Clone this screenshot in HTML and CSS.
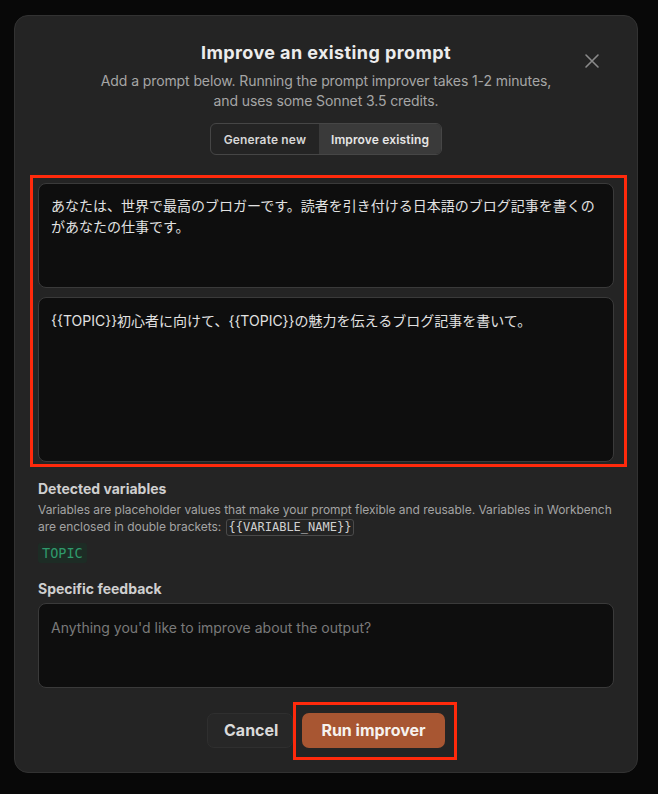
FILE: index.html
```html
<!DOCTYPE html>
<html lang="ja">
<head>
    <meta charset="UTF-8">
    <meta name="viewport" content="width=device-width, initial-scale=1.0">
    <title>Improve an existing prompt</title>
    <link rel="stylesheet" href="styles.css">
</head>
<body>
    <div class="modal">
        <button class="modal-close" aria-label="Close">
            <svg width="16" height="16" viewBox="0 0 16 16" fill="none" stroke="#8a8a8a" stroke-width="1.6" stroke-linecap="round">
                <path d="M2 2L14 14M14 2L2 14"/>
            </svg>
        </button>
        <h1 class="modal-title">Improve an existing prompt</h1>
        <p class="modal-sub">Add a prompt below. Running the prompt improver takes 1-2 minutes,<br>and uses some Sonnet 3.5 credits.</p>

        <div class="seg">
            <span class="seg-item">Generate new</span>
            <span class="seg-item seg-active">Improve existing</span>
        </div>

        <div class="prompt-group mark">
            <div class="field field-system">あなたは、世界で最高のブロガーです。読者を引き付ける日本語のブログ記事を書くのがあなたの仕事です。</div>
            <div class="field field-user">{{TOPIC}}初心者に向けて、{{TOPIC}}の魅力を伝えるブログ記事を書いて。</div>
        </div>

        <h2 class="section-title">Detected variables</h2>
        <p class="section-desc">Variables are placeholder values that make your prompt flexible and reusable. Variables in Workbench are enclosed in double brackets: <code class="code">{{VARIABLE_NAME}}</code></p>
        <div class="vars">
            <span class="var-chip">TOPIC</span>
        </div>

        <h2 class="section-title section-gap">Specific feedback</h2>
        <div class="field field-feedback placeholder">Anything you'd like to improve about the output?</div>

        <div class="actions">
            <button class="btn btn-cancel">Cancel</button>
            <button class="btn btn-run mark-btn">Run improver</button>
        </div>
    </div>
</body>
</html>
```

FILE: styles.css
```css
*{
    box-sizing: border-box;
}
html,
body{
    margin: 0;
    height: 100%;
}
body{
    background: #080808;
    font-family: Inter, "Noto Sans CJK JP", sans-serif;
    color: #e6e6e6;
    padding: 15px 20px 0 14px;
}
.modal{
    position: relative;
    width: 624px;
    height: 758px;
    background: #242424;
    border: 1px solid #323232;
    border-radius: 14px;
    padding: 25px 23px 0;
    display: flex;
    flex-direction: column;
}
.modal-close{
    position: absolute;
    top: 37px;
    right: 37px;
    width: 16px;
    height: 16px;
    padding: 0;
    border: 0;
    background: none;
}
.modal-title{
    margin: 0;
    text-align: center;
    font-size: 18px;
    line-height: 24px;
    font-weight: 700;
    color: #ececec;
    letter-spacing: 0.4px;
}
.modal-sub{
    margin: 6px 0 0;
    text-align: center;
    font-size: 14px;
    line-height: 20px;
    color: #a6a6a6;
    letter-spacing: -0.1px;
}
.seg{
    align-self: center;
    display: flex;
    margin-top: 12px;
    height: 32px;
    border: 1px solid #464646;
    border-radius: 6px;
    overflow: hidden;
    font-size: 12px;
    font-weight: 600;
}
.seg-item{
    display: flex;
    align-items: center;
    padding: 0 12px;
    color: #d6d6d6;
    letter-spacing: 0.15px;
}
.seg-item:first-child{
    width: 108px;
    justify-content: center;
}
.seg-active{
    background: #3a3a3a;
    color: #e6e6e6;
}
.prompt-group{
    position: relative;
    margin-top: 28px;
    display: flex;
    flex-direction: column;
    gap: 9px;
}
.mark::after,
.mark-btn::after{
    content: "";
    position: absolute;
    border: 3px solid #ff2a0c;
    pointer-events: none;
}
.mark::after{
    top: -8px;
    left: -8px;
    right: -13px;
    bottom: -5px;
}
.field{
    background: #0e0e0e;
    border: 1px solid #3a3a3a;
    border-radius: 8px;
    padding: 11px 12px;
    font-size: 14px;
    line-height: 21px;
    color: #e2e2e2;
}
.field-system{
    height: 105px;
}
.field-user{
    height: 165px;
    padding-top: 12px;
}
.section-title{
    margin: 17px 0 0;
    font-size: 14px;
    line-height: 20px;
    font-weight: 700;
    color: #cfcfcf;
}
.section-gap{
    margin-top: 16px;
}
.section-desc{
    margin: 2px 0 0;
    font-size: 12px;
    line-height: 17px;
    color: #a3a3a3;
    letter-spacing: -0.04px;
}
.code{
    display: inline-block;
    vertical-align: middle;
    font-family: "DejaVu Sans Mono", monospace;
    font-size: 12px;
    line-height: 15px;
    color: #d0d0d0;
    border: 1px solid #4a4a4a;
    border-radius: 3px;
    padding: 0 2px;
    margin: -1px 0 0 1px;
    letter-spacing: 0;
}
.vars{
    display: flex;
    margin-top: 7px;
}
.var-chip{
    font-family: "DejaVu Sans Mono", monospace;
    font-size: 13.5px;
    line-height: 20px;
    color: #2f9a6c;
    background: #1d2c25;
    border-radius: 3px;
    padding: 0 4px;
}
.field-feedback{
    margin-top: 4px;
    height: 85px;
    padding-top: 13px;
}
.placeholder{
    color: #7a7a7a;
}
.actions{
    display: flex;
    justify-content: center;
    gap: 9px;
    margin-top: 25px;
}
.btn{
    height: 35px;
    border-radius: 7px;
    font-family: Inter, sans-serif;
    font-size: 16px;
    font-weight: 700;
    padding: 0 16px;
}
.btn-cancel{
    width: 86px;
    background: #272727;
    border: 1px solid #2f2f2f;
    color: #dadada;
}
.btn-run{
    position: relative;
    width: 143px;
    background: #a85632;
    border: 0;
    color: #f6f2ee;
}
.mark-btn::after{
    top: -11px;
    left: -9px;
    right: -12px;
    bottom: -12px;
}
```
